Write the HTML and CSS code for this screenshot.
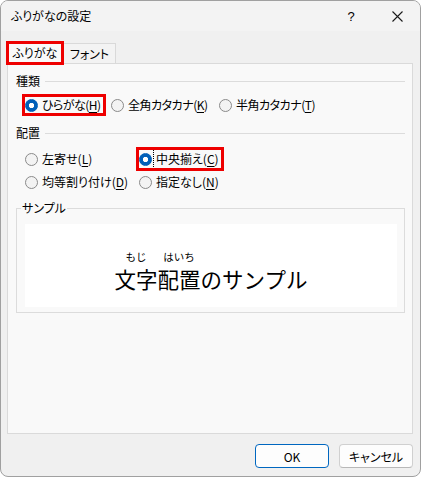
FILE: index.html
```html
<!DOCTYPE html>
<html lang="ja">
<head>
<meta charset="utf-8">
<title>ふりがなの設定</title>
<link rel="stylesheet" href="styles.css">
</head>
<body>
<div class="window">
  <div class="titlebar">
    <span class="title">ふりがなの設定</span>
    <span class="caption-btn help">?</span>
    <span class="caption-btn close"><svg width="11" height="11" viewBox="0 0 11 11"><path d="M0.5 0.5 L10.5 10.5 M10.5 0.5 L0.5 10.5" stroke="#1a1a1a" stroke-width="1.1" fill="none"/></svg></span>
  </div>
  <div class="body">
    <div class="tabs">
      <div class="tab tab-active mark-tab">ふりがな</div>
      <div class="tab">フォント</div>
    </div>
    <div class="panel">
      <div class="section-head"><span>種類</span><span class="rule"></span></div>
      <div class="row row-type">
        <label class="radio mark"><span class="dot on"></span><span class="lbl">ひらがな(<u>H</u>)</span></label>
        <label class="radio"><span class="dot"></span><span class="lbl">全角カタカナ(<u>K</u>)</span></label>
        <label class="radio"><span class="dot"></span><span class="lbl">半角カタカナ(<u>T</u>)</span></label>
      </div>
      <div class="section-head head-2"><span>配置</span><span class="rule"></span></div>
      <div class="row row-align row-2">
        <label class="radio"><span class="dot"></span><span class="lbl">左寄せ(<u>L</u>)</span></label>
        <label class="radio mark"><span class="dot on"></span><span class="lbl focus">中央揃え(<u>C</u>)</span></label>
      </div>
      <div class="row row-align row-3">
        <label class="radio"><span class="dot"></span><span class="lbl">均等割り付け(<u>D</u>)</span></label>
        <label class="radio"><span class="dot"></span><span class="lbl">指定なし(<u>N</u>)</span></label>
      </div>
      <fieldset class="sample">
        <legend>サンプル</legend>
        <div class="preview">
          <span class="seg"><span class="furi">もじ</span><span class="base">文字</span></span>
          <span class="seg"><span class="furi">はいち</span><span class="base">配置</span></span>
          <span class="seg"><span class="base">のサンプル</span></span>
        </div>
      </fieldset>
    </div>
    <div class="buttons">
      <button class="btn btn-default">OK</button>
      <button class="btn">キャンセル</button>
    </div>
  </div>
</div>
</body>
</html>
```

FILE: styles.css
```css
* { box-sizing: border-box; }

html, body {
  margin: 0;
  padding: 0;
  background: #ffffff;
}

body {
  font-family: "Noto Sans CJK JP", "Noto Sans", sans-serif;
  font-size: 12px;
  color: #000;
  font-feature-settings: "palt";
}

.window {
  width: 421px;
  height: 477px;
  border: 1px solid #a0a0a0;
  border-radius: 8px;
  background: #f0f0f0;
  overflow: hidden;
  display: flex;
  flex-direction: column;
}

.titlebar {
  height: 30px;
  flex: none;
  display: flex;
  align-items: center;
  background: #f3f3f3;
  padding-left: 10px;
}

.title {
  flex: 1;
  line-height: 16px;
}

.caption-btn {
  width: 46px;
  height: 30px;
  display: flex;
  align-items: center;
  justify-content: center;
}

.help {
  font-size: 13px;
  font-family: "Liberation Sans", "Noto Sans", sans-serif;
}

.close svg { display: block; }

.body {
  flex: 1;
  display: flex;
  flex-direction: column;
  padding: 11px 7px 8px 6px;
}

.tabs {
  display: flex;
  align-items: flex-end;
  height: 21px;
  flex: none;
}

.tab {
  height: 20px;
  width: 53px;
  border: 1px solid #d9d9d9;
  border-bottom: none;
  background: #f3f3f3;
  display: flex;
  align-items: center;
  justify-content: center;
  line-height: 16px;
}

.tab-active {
  width: 56px;
  height: 22px;
  margin-bottom: -1px;
  background: #f9f9f9;
  position: relative;
  z-index: 1;
  padding-bottom: 1px;
}

.mark-tab {
  outline: 3px solid #ee0000;
  outline-offset: -2px;
}

.panel {
  flex: 1;
  border: 1px solid #dadada;
  background: #f9f9f9;
  padding: 0 7px 0 8px;
  display: flex;
  flex-direction: column;
}

.section-head {
  display: flex;
  align-items: center;
  gap: 5px;
  height: 16px;
  line-height: 16px;
  margin-top: 9px;
}

.head-2 { margin-top: 10px; }

.rule {
  flex: 1;
  height: 1px;
  background: #dcdcdc;
  margin-top: 1px;
}

.row {
  display: grid;
  height: 20px;
  align-items: center;
  padding-left: 9px;
}

.row-type {
  margin-top: 6px;
  grid-template-columns: 86px 108px auto;
}

.row-align { grid-template-columns: 114px auto; }
.row-2 { margin-top: 8px; }
.row-3 { margin-top: 3px; }

.radio {
  display: flex;
  align-items: center;
  gap: 2px;
  justify-self: start;
}

.dot {
  width: 13px;
  height: 13px;
  border-radius: 50%;
  border: 1px solid #8a8a8a;
  background: #f3f3f3;
  flex: none;
}

.dot.on {
  border-color: #005fb8;
  background: radial-gradient(circle at center, #ffffff 0, #ffffff 2.3px, #005fb8 3px);
}

.lbl {
  line-height: 16px;
  padding: 0 2px;
  white-space: nowrap;
}

.row-type .lbl { letter-spacing: -0.5px; }

.lbl u { text-underline-offset: 2px; }

.lbl.focus {
  padding: 1px 2px;
  outline: 1px dotted #000;
}

.mark {
  outline: 3px solid #ee0000;
  outline-offset: 0;
}

.sample {
  margin: 8px 0 0 0;
  min-inline-size: 0;
  border: 1px solid #dcdcdc;
  padding: 8px 7px 5px 8px;
}

.sample legend {
  padding: 0 1px;
  margin-left: -4px;
  line-height: 16px;
}

.preview {
  height: 83px;
  background: #ffffff;
  display: flex;
  justify-content: center;
  align-items: flex-start;
  padding-top: 27px;
  font-feature-settings: normal;
}

.seg {
  display: flex;
  flex-direction: column;
  align-items: center;
  justify-content: flex-end;
  height: 40px;
}

.furi {
  font-size: 10.5px;
  line-height: 12px;
  margin-bottom: 4px;
  white-space: nowrap;
}

.base {
  font-size: 21.5px;
  line-height: 24px;
  white-space: nowrap;
}

.buttons {
  flex: none;
  display: flex;
  justify-content: flex-end;
  gap: 10px;
  margin-top: 10px;
  height: 24px;
}

.btn {
  width: 74px;
  height: 24px;
  font: inherit;
  color: #000;
  background: #fdfdfd;
  border: 1px solid #d0d0d0;
  border-bottom-color: #b8b8b8;
  border-radius: 4px;
  padding: 0;
}

.btn-default {
  border: 1px solid #0067c0;
}
```
